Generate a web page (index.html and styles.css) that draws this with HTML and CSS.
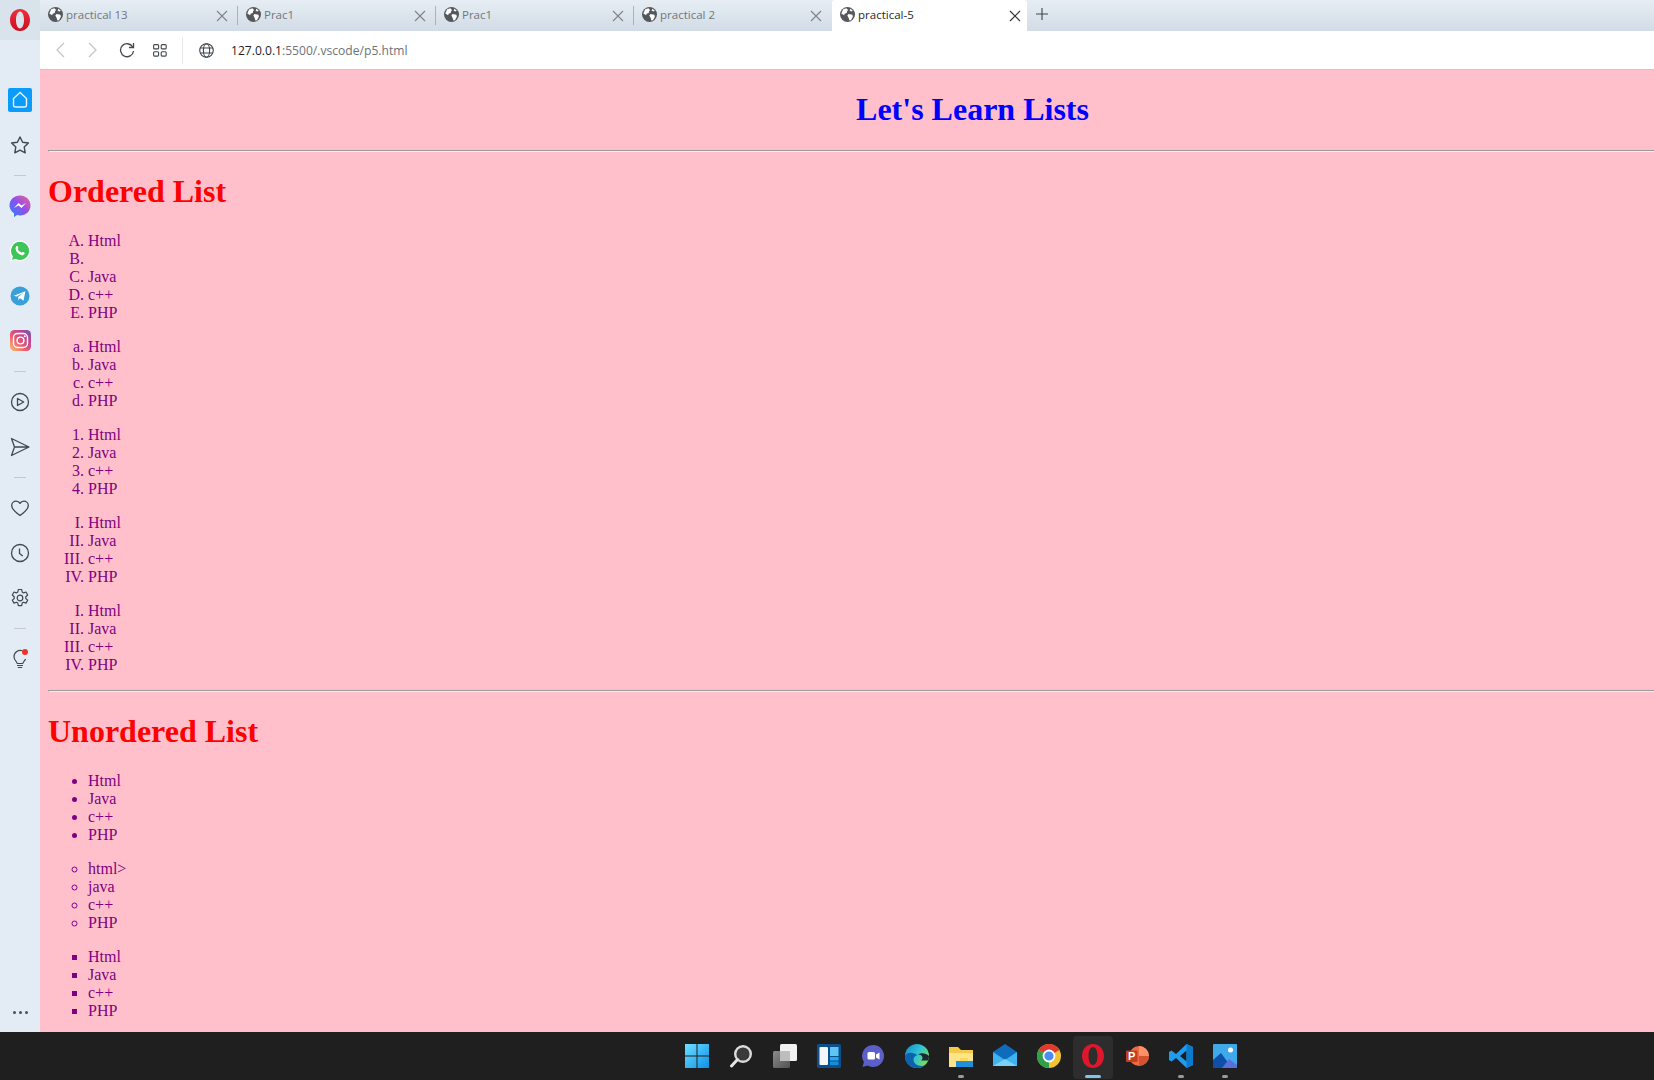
FILE: index.html
```html
<!DOCTYPE html>
<html lang="en">
<head>
    <meta charset="UTF-8">
    <title>practical-5</title>
    <link rel="stylesheet" href="styles.css">
</head>
<body>
    <svg class="defs" width="0" height="0">
        <symbol id="fav" viewBox="0 0 14 14">
            <circle cx="7" cy="7" r="7" fill="#54585d"/>
            <path d="M3 2.200l3-1 1.500 1.600-1 1.400-.2 1.400-2 .6-.4 1.400L1.200 6zM8 6.600l3.600.6.4 2-1.800 3.200-1.400.2-.8-2.600L6.800 8zM9.600 1.600l2.400 2-1.600.6-1.400-1z" fill="#fff"/>
        </symbol>
        <symbol id="x" viewBox="0 0 12 12">
            <path d="M1 1l10 10M11 1L1 11" fill="none" stroke="currentColor" stroke-width="1.100"/>
        </symbol>
    </svg>

    <div class="window">
        <aside class="sidebar">
            <div class="opera-corner">
                <svg width="22" height="24" viewBox="0 0 22 24">
                    <defs><linearGradient id="opr" x1="0" y1="0" x2="0" y2="1"><stop offset="0" stop-color="#f0303c"/><stop offset="1" stop-color="#c80f22"/></linearGradient></defs>
                    <path fill="url(#opr)" fill-rule="evenodd" d="M11 1c6 0 10 5 10 11s-4 11-10 11S1 18 1 12 5 1 11 1zm0 2.600C8.600 3.600 7 7.400 7 12s1.600 8.400 4 8.400 4-3.800 4-8.400-1.600-8.400-4-8.400z"/>
                </svg>
            </div>
            <nav class="side-icons">
                <span class="side-btn home">
                    <svg width="24" height="24" viewBox="0 0 24 24"><rect width="24" height="24" rx="2" fill="#0a9bfb"/><path d="M5.500 10.500L12 4.500l6.500 6v6.500a2 2 0 0 1-2 2h-9a2 2 0 0 1-2-2z" fill="none" stroke="#e8f6ff" stroke-width="1.400"/></svg>
                </span>
                <span class="side-btn">
                    <svg width="20" height="20" viewBox="0 0 20 20"><path d="M10 2l2.600 5.200 5.800.8-4.200 4 1 5.800-5.200-2.700-5.200 2.700 1-5.800-4.200-4 5.800-.8z" fill="none" stroke="#3f4750" stroke-width="1.400" stroke-linejoin="round"/></svg>
                </span>
                <i class="side-sep"></i>
                <span class="side-btn">
                    <svg width="22" height="22" viewBox="0 0 22 22"><defs><linearGradient id="msg" x1="0" y1="1" x2="1" y2="0"><stop offset="0" stop-color="#1e8cf5"/><stop offset=".5" stop-color="#8a50f0"/><stop offset="1" stop-color="#f5608c"/></linearGradient></defs><path d="M11 .5c5.800 0 10.500 4.200 10.500 10S16.800 20.500 11 20.500c-1 0-2-.1-2.900-.4L5 22v-3.800C2.200 16.400.5 13.700.5 10.500.5 4.700 5.200.5 11 .5z" fill="url(#msg)"/><path d="M5 13l4.500-5 3 2.600L17 8l-4.500 5-3-2.600z" fill="#fff"/></svg>
                </span>
                <span class="side-btn">
                    <svg width="22" height="22" viewBox="0 0 22 22"><path d="M11 1.200a9.700 9.700 0 1 1-4.700 18.200l-4.300 1.300 1.300-4.200A9.700 9.700 0 0 1 11 1.200z" fill="#3fc457" stroke="#fff" stroke-width="1.200"/><path d="M7.800 6c.8-.4 1.200.4 1.600 1.500.3.700-.7 1.300-.5 1.800.5 1.300 2 2.800 3.400 3.300.6.200 1-.9 1.700-.6 1 .4 2 1 1.600 1.800-.6 1.300-2.200 1.700-3.500 1.200-2.900-1-5.200-3.300-5.500-6C6.500 7.800 6.900 6.500 7.800 6z" fill="#fff"/></svg>
                </span>
                <span class="side-btn">
                    <svg width="20" height="20" viewBox="0 0 20 20"><circle cx="10" cy="10" r="9.500" fill="#37a0d8"/><path d="M3.600 9.800l11.800-4.600-1.900 9.600-3.400-2.500-1.700 1.700-.3-2.900 5.200-4.300-6.500 3.800z" fill="#fff"/></svg>
                </span>
                <span class="side-btn">
                    <svg width="21" height="21" viewBox="0 0 21 21"><defs><linearGradient id="ig" x1="0" y1="1" x2="1" y2="0"><stop offset="0" stop-color="#fdc468"/><stop offset=".4" stop-color="#ee5a6f"/><stop offset=".75" stop-color="#b5459a"/><stop offset="1" stop-color="#6a55b5"/></linearGradient></defs><rect width="21" height="21" rx="4.500" fill="url(#ig)"/><rect x="3.500" y="3.500" width="14" height="14" rx="4" fill="none" stroke="#fff" stroke-width="1.400"/><circle cx="10.500" cy="10.500" r="3.400" fill="none" stroke="#fff" stroke-width="1.400"/><circle cx="14.800" cy="6.200" r="1" fill="#fff"/></svg>
                </span>
                <i class="side-sep"></i>
                <span class="side-btn">
                    <svg width="20" height="20" viewBox="0 0 20 20"><circle cx="10" cy="10" r="8.500" fill="none" stroke="#3f4750" stroke-width="1.300"/><path d="M7.500 6.500l6.200 3.500-6.200 3.500z" fill="none" stroke="#3f4750" stroke-width="1.300" stroke-linejoin="round"/></svg>
                </span>
                <span class="side-btn">
                    <svg width="20" height="20" viewBox="0 0 20 20"><path d="M1.500 1.500l17.500 8.500-17.500 8.500 3-8.500zM4.500 10H19" fill="none" stroke="#3f4750" stroke-width="1.300" stroke-linejoin="round"/></svg>
                </span>
                <i class="side-sep"></i>
                <span class="side-btn">
                    <svg width="20" height="20" viewBox="0 0 20 20"><path d="M10 17.500C5 14 1.700 11.200 1.700 7.500c0-2.500 2.100-4.300 4.400-4.300 1.600 0 3.100.8 3.900 2.200.8-1.400 2.300-2.200 3.900-2.200 2.300 0 4.400 1.800 4.400 4.300 0 3.700-3.300 6.500-8.300 10z" fill="none" stroke="#3f4750" stroke-width="1.300" stroke-linejoin="round"/></svg>
                </span>
                <span class="side-btn">
                    <svg width="20" height="20" viewBox="0 0 20 20"><circle cx="10" cy="10" r="8.500" fill="none" stroke="#3f4750" stroke-width="1.300"/><path d="M9.500 5.500v5l3.200 2.600" fill="none" stroke="#3f4750" stroke-width="1.300"/></svg>
                </span>
                <span class="side-btn">
                    <svg width="20" height="20" viewBox="0 0 20 20"><path d="M8.300 1.500h3.400l.5 2.600 1.400.8 2.400-.9 1.700 3-1.900 1.700v1.800l1.900 1.600-1.700 3-2.400-.9-1.400.8-.5 2.700H8.300l-.5-2.700-1.400-.8-2.400.9-1.700-3 1.900-1.600V8.700L2.300 7l1.700-3 2.400.9 1.400-.8z" fill="none" stroke="#3f4750" stroke-width="1.200" stroke-linejoin="round"/><circle cx="10" cy="10" r="2.800" fill="none" stroke="#3f4750" stroke-width="1.200"/></svg>
                </span>
                <i class="side-sep"></i>
                <span class="side-btn">
                    <svg width="20" height="22" viewBox="0 0 20 22"><path d="M7 15.500c0-2.200-3-3.200-3-7A6.200 6.200 0 0 1 12.500 2.800M13 15.500c0-1.600 1.600-2.600 2.600-4.500M7 15.500h6M7 17.500h6M7.800 19.500h4.400" fill="none" stroke="#3f4750" stroke-width="1.200"/><circle cx="15" cy="4" r="3" fill="#f0322c"/></svg>
                </span>
            </nav>
            <div class="side-more"><b></b><b></b><b></b></div>
        </aside>

        <div class="browser">
            <div class="tabs">
                <div class="tab"><svg class="favicon"><use href="#fav"/></svg><span class="tab-title">practical 13</span><svg class="tab-close"><use href="#x"/></svg></div>
                <div class="tab"><svg class="favicon"><use href="#fav"/></svg><span class="tab-title">Prac1</span><svg class="tab-close"><use href="#x"/></svg></div>
                <div class="tab"><svg class="favicon"><use href="#fav"/></svg><span class="tab-title">Prac1</span><svg class="tab-close"><use href="#x"/></svg></div>
                <div class="tab last"><svg class="favicon"><use href="#fav"/></svg><span class="tab-title">practical 2</span><svg class="tab-close"><use href="#x"/></svg></div>
                <div class="tab active"><svg class="favicon"><use href="#fav"/></svg><span class="tab-title">practical-5</span><svg class="tab-close"><use href="#x"/></svg></div>
                <svg class="new-tab" width="12" height="12" viewBox="0 0 12 12"><path d="M6 0v12M0 6h12" stroke="#3d444b" stroke-width="1.100"/></svg>
            </div>
            <div class="address-bar">
                <svg class="nav-back" width="10" height="16" viewBox="0 0 10 16"><path d="M9 1L2 8l7 7" fill="none" stroke="#c2c6ca" stroke-width="1.300"/></svg>
                <svg class="nav-fwd" width="10" height="16" viewBox="0 0 10 16"><path d="M1 1l7 7-7 7" fill="none" stroke="#c2c6ca" stroke-width="1.300"/></svg>
                <svg class="nav-reload" width="16" height="16" viewBox="0 0 16 16"><path d="M13.700 5A6.500 6.500 0 1 0 14.500 9" fill="none" stroke="#42484f" stroke-width="1.300"/><path d="M14.500 1v4.500H10" fill="none" stroke="#42484f" stroke-width="1.300"/></svg>
                <svg class="nav-grid" width="14" height="13" viewBox="0 0 14 13"><g fill="none" stroke="#42484f" stroke-width="1.100"><rect x=".6" y=".6" width="5" height="4.300" rx="1"/><rect x="8.200" y=".6" width="5" height="4.300" rx="1"/><rect x=".6" y="7.800" width="5" height="4.300" rx="1"/><rect x="8.200" y="7.800" width="5" height="4.300" rx="1"/></g></svg>
                <i class="addr-sep"></i>
                <svg class="nav-globe" width="15" height="15" viewBox="0 0 14 14"><g fill="none" stroke="#3b4148" stroke-width="1"><circle cx="7" cy="7" r="6.300"/><ellipse cx="7" cy="7" rx="2.900" ry="6.300"/><path d="M1.200 4.700h11.600M1.200 9.300h11.600"/></g></svg>
                <span class="url"><span class="url-host">127.0.0.1</span>:5500/.vscode/p5.html</span>
            </div>
            <main class="viewport">
                <div class="doc">
                    <h1 class="title">Let's Learn Lists</h1>
                    <hr>
                    <h1 class="section">Ordered List</h1>
                    <ol type="A">
                        <li>Html</li>
                        <li></li>
                        <li>Java</li>
                        <li>c++</li>
                        <li>PHP</li>
                    </ol>
                    <ol type="a">
                        <li>Html</li>
                        <li>Java</li>
                        <li>c++</li>
                        <li>PHP</li>
                    </ol>
                    <ol type="1">
                        <li>Html</li>
                        <li>Java</li>
                        <li>c++</li>
                        <li>PHP</li>
                    </ol>
                    <ol type="I">
                        <li>Html</li>
                        <li>Java</li>
                        <li>c++</li>
                        <li>PHP</li>
                    </ol>
                    <ol type="I">
                        <li>Html</li>
                        <li>Java</li>
                        <li>c++</li>
                        <li>PHP</li>
                    </ol>
                    <hr>
                    <h1 class="section">Unordered List</h1>
                    <ul class="disc">
                        <li>Html</li>
                        <li>Java</li>
                        <li>c++</li>
                        <li>PHP</li>
                    </ul>
                    <ul class="circle">
                        <li>html&gt;</li>
                        <li>java</li>
                        <li>c++</li>
                        <li>PHP</li>
                    </ul>
                    <ul class="square">
                        <li>Html</li>
                        <li>Java</li>
                        <li>c++</li>
                        <li>PHP</li>
                    </ul>
                </div>
            </main>
        </div>
    </div>

    <footer class="taskbar">
        <span class="task">
            <svg width="24" height="24" viewBox="0 0 24 24"><defs><linearGradient id="win" x1="0" y1="0" x2="1" y2="1"><stop offset="0" stop-color="#6ce0ff"/><stop offset="1" stop-color="#0f8fe8"/></linearGradient></defs><path d="M0 0h11.500v11.500H0zM12.500 0H24v11.500H12.500zM0 12.500h11.500V24H0zM12.500 12.500H24V24H12.500z" fill="url(#win)"/></svg>
        </span>
        <span class="task">
            <svg width="24" height="24" viewBox="0 0 24 24"><circle cx="14" cy="10" r="7.800" fill="#3a3a3a" stroke="#dcdcdc" stroke-width="2.400"/><path d="M8.500 15.500L2.500 22" stroke="#e6e6e6" stroke-width="3" stroke-linecap="round"/></svg>
        </span>
        <span class="task">
            <svg width="24" height="24" viewBox="0 0 24 24"><defs><linearGradient id="tv" x1="0" y1="0" x2="1" y2="1"><stop offset="0" stop-color="#8a8a8a"/><stop offset="1" stop-color="#525252"/></linearGradient></defs><rect x="7" y="0" width="17" height="17" rx="1.500" fill="#f2f2f2"/><rect x="0" y="7" width="17" height="17" rx="1.500" fill="url(#tv)"/><rect x="7" y="7" width="10" height="10" fill="#bdbdbd"/></svg>
        </span>
        <span class="task">
            <svg width="24" height="24" viewBox="0 0 24 24"><rect width="24" height="24" rx="1.500" fill="#0b4f8c"/><rect x="2.500" y="3" width="8.500" height="18" rx="1" fill="#f4f6fb"/><rect x="13" y="3" width="8.500" height="9" fill="#5fc5f2"/><rect x="13" y="13" width="8.500" height="3.500" fill="#2aa6ea"/><rect x="13" y="17.500" width="8.500" height="3.500" fill="#1390dc"/></svg>
        </span>
        <span class="task">
            <svg width="24" height="24" viewBox="0 0 24 24"><path d="M12 1a11 11 0 1 1-5.500 20.500L1.500 23l1.400-5A11 11 0 0 1 12 1z" fill="#5b5fc7"/><rect x="6.500" y="8" width="7.500" height="7.500" rx="1.500" fill="#fff"/><path d="M15 10.500l3.500-2v7l-3.500-2z" fill="#fff"/></svg>
        </span>
        <span class="task">
            <svg width="24" height="24" viewBox="0 0 24 24"><defs><linearGradient id="edge" x1="0" y1="0" x2="1" y2=".6"><stop offset="0" stop-color="#1a86c8"/><stop offset=".55" stop-color="#2cc4d8"/><stop offset="1" stop-color="#7bdc5c"/></linearGradient></defs><circle cx="12" cy="12" r="12" fill="url(#edge)"/><path d="M0 12c0 7 5 12 12 12 3 0 5.500-1 7.500-2.500-5 1.500-11-1-11-6 0-2 1.500-4 4-4.500C9 8.500 2 7 0 12z" fill="#0c62ad"/><path d="M13 10.500c2.800-.2 4.500 1.500 4.500 3.500 0 1.200-.7 2-1.500 2.500h7c.6-1.400 1-3 1-4.500-3-3-8-3.500-11-1.500z" fill="#1a2a33"/></svg>
        </span>
        <span class="task running">
            <svg width="24" height="24" viewBox="0 0 24 24"><path d="M0 3h9l3 3h12v17H0z" fill="#f7c948"/><path d="M0 9h24v14H0z" fill="#fde38a"/><path d="M7 17h17v6H7z" fill="#1e8fd8"/><path d="M11 14h8v3h-8z" fill="#ffd95a"/></svg>
        </span>
        <span class="task">
            <svg width="24" height="24" viewBox="0 0 24 24"><path d="M12 0l12 8v14H0V8z" fill="#0f6cbd"/><path d="M0 8l12 8 12-8v14H0z" fill="#3fb2f0"/><path d="M0 22l12-7 12 7z" fill="#7bd2f8"/></svg>
        </span>
        <span class="task">
            <svg width="24" height="24" viewBox="0 0 24 24"><circle cx="12" cy="12" r="12" fill="#f1c232"/><path d="M12 12L1.600 6A12 12 0 0 1 22.400 6z" fill="#e0392f"/><path d="M12 12L1.600 6A12 12 0 0 0 12 24z" fill="#2da14a"/><circle cx="12" cy="12" r="5.500" fill="#4a8df0" stroke="#fff" stroke-width="1.800"/></svg>
        </span>
        <span class="task active-app">
            <svg width="24" height="26" viewBox="0 0 24 26"><path fill="#e0172c" fill-rule="evenodd" d="M12 1c6.500 0 11 5.500 11 12s-4.500 12-11 12S1 19.500 1 13 5.500 1 12 1zm0 3c-2.800 0-4.500 4-4.500 9s1.700 9 4.500 9 4.500-4 4.500-9-1.700-9-4.500-9z"/></svg>
        </span>
        <span class="task">
            <svg width="24" height="24" viewBox="0 0 24 24"><circle cx="14" cy="12" r="10" fill="#ed6c47"/><path d="M14 2a10 10 0 0 1 10 10H14z" fill="#ff8f6b"/><path d="M14 12h10a10 10 0 0 1-10 10z" fill="#d35230"/><rect x="1" y="6.500" width="11.500" height="11.500" rx="1" fill="#c43e1c"/><text class="ppt-letter" x="6.700" y="15.800">P</text></svg>
        </span>
        <span class="task running">
            <svg width="24" height="24" viewBox="0 0 24 24"><path d="M17.500 0L24 3v18l-6.500 3L7 14l-4.500 3.500L0 16v-8l2.500-1.500L7 10zM17.500 6.500L11 12l6.500 5.500z" fill="#1f9cf0"/><path d="M17.500 0L24 3v18l-6.500 3z" fill="#0a7acb"/></svg>
        </span>
        <span class="task running">
            <svg width="24" height="24" viewBox="0 0 24 24"><rect width="24" height="24" rx="1" fill="#3fa9ec"/><path d="M0 24v-8l8-7 11 15z" fill="#0f4fa8"/><path d="M9 24l7-9 8 6v3z" fill="#5a6fd8"/><circle cx="17.500" cy="6" r="2.500" fill="#fff"/></svg>
        </span>
    </footer>
</body>
</html>
```
FILE: styles.css
```css
* {
    box-sizing: border-box;
}

html, body {
    margin: 0;
    height: 100%;
    overflow: hidden;
}

body {
    display: flex;
    flex-direction: column;
}

.defs {
    display: block;
    height: 0;
}

.window {
    display: flex;
    height: 1032px;
    flex: none;
}

/* left rail */
.sidebar {
    width: 40px;
    flex: none;
    display: flex;
    flex-direction: column;
    align-items: center;
    background: #e3ecf5;
}

.opera-corner {
    width: 40px;
    height: 40px;
    flex: none;
    display: flex;
    align-items: center;
    justify-content: center;
    background: #d8e3ec;
}

.side-icons {
    display: flex;
    flex-direction: column;
    align-items: center;
    padding-top: 37.500px;
}

.side-btn {
    width: 40px;
    height: 44.800px;
    display: flex;
    align-items: center;
    justify-content: center;
}

.side-sep {
    width: 12px;
    height: 1px;
    margin: 7.800px 0;
    background: #c3c9cf;
}

.side-more {
    margin-top: auto;
    margin-bottom: 18px;
    display: flex;
    gap: 3px;
}

.side-more b {
    width: 3px;
    height: 3px;
    border-radius: 50%;
    background: #4a5058;
}

/* tabs + address */
.browser {
    flex: 1;
    min-width: 0;
    display: flex;
    flex-direction: column;
}

.tabs {
    height: 31px;
    flex: none;
    display: flex;
    align-items: stretch;
    background: linear-gradient(#e6edf4, #d2dce6);
    font-family: "Open Sans", "Noto Sans", sans-serif;
    font-size: 11.500px;
}

.tab {
    width: 198px;
    flex: none;
    display: flex;
    align-items: center;
    padding: 0 8px;
    color: #70767d;
    position: relative;
}

.tab::after {
    content: "";
    position: absolute;
    right: 0;
    top: 6px;
    bottom: 6px;
    width: 1px;
    background: #a9b3bc;
}

.tab.last::after,
.tab.active::after {
    display: none;
}

.tab.active {
    width: 195px;
    background: #fff;
    color: #24292e;
    border-radius: 3px 3px 0 0;
}

.favicon {
    width: 15px;
    height: 15px;
    flex: none;
    margin: 0 3px 2px 0;
}

.tab-title {
    flex: 1;
    margin-bottom: 2px;
}

.tab-close {
    width: 12px;
    height: 12px;
    flex: none;
    margin-right: 2px;
    color: #7d838a;
}

.tab.active .tab-close {
    color: #2b3036;
    margin-right: -2px;
}

.new-tab {
    margin: 8px 0 0 9px;
}

.address-bar {
    height: 39px;
    flex: none;
    display: flex;
    align-items: center;
    background: #fff;
    border-bottom: 1px solid #c6c9cc;
}

.nav-back {
    margin-left: 15px;
}

.nav-fwd {
    margin-left: 23px;
}

.nav-reload {
    margin-left: 21px;
}

.nav-grid {
    margin-left: 18px;
}

.addr-sep {
    width: 1px;
    height: 27px;
    margin-left: 15px;
    background: #e9ebed;
}

.nav-globe {
    margin-left: 16px;
}

.url {
    margin-left: 17px;
    font-family: "Open Sans", "Noto Sans", sans-serif;
    font-size: 12.100px;
    color: #6c7279;
}

.url-host {
    color: #1d2125;
}

/* the page itself, wider than the window so it gets cropped */
.viewport {
    flex: 1;
    min-height: 0;
    overflow: hidden;
    background: pink;
}

.doc {
    width: 1849px;
    margin: 8px;
    font-family: "Liberation Serif", serif;
    font-size: 16px;
    color: purple;
}

.title {
    text-align: center;
    color: blue;
}

.section {
    color: red;
}

.disc {
    list-style-type: disc;
}

.circle {
    list-style-type: circle;
}

.square {
    list-style-type: square;
}

/* windows taskbar */
.taskbar {
    height: 48px;
    flex: none;
    display: flex;
    align-items: center;
    padding-left: 675px;
    background: #1f1f1f;
}

.task {
    width: 44px;
    height: 48px;
    flex: none;
    display: flex;
    align-items: center;
    justify-content: center;
    position: relative;
}

.task.running::after,
.task.active-app::after {
    content: "";
    position: absolute;
    bottom: 2px;
    left: 50%;
    width: 6px;
    height: 3px;
    margin-left: -3px;
    border-radius: 2px;
    background: #9a9a9a;
}

.task.active-app::before {
    content: "";
    position: absolute;
    left: 2px;
    right: 2px;
    top: 4px;
    bottom: 1px;
    border-radius: 4px;
    background: #2d2d2d;
}

.task.active-app::after {
    width: 16px;
    margin-left: -8px;
    background: #78c8f0;
}

.task.active-app svg {
    position: relative;
}

.ppt-letter {
    font-family: "Liberation Sans", sans-serif;
    font-size: 11px;
    font-weight: bold;
    fill: #fff;
    text-anchor: middle;
}
```
